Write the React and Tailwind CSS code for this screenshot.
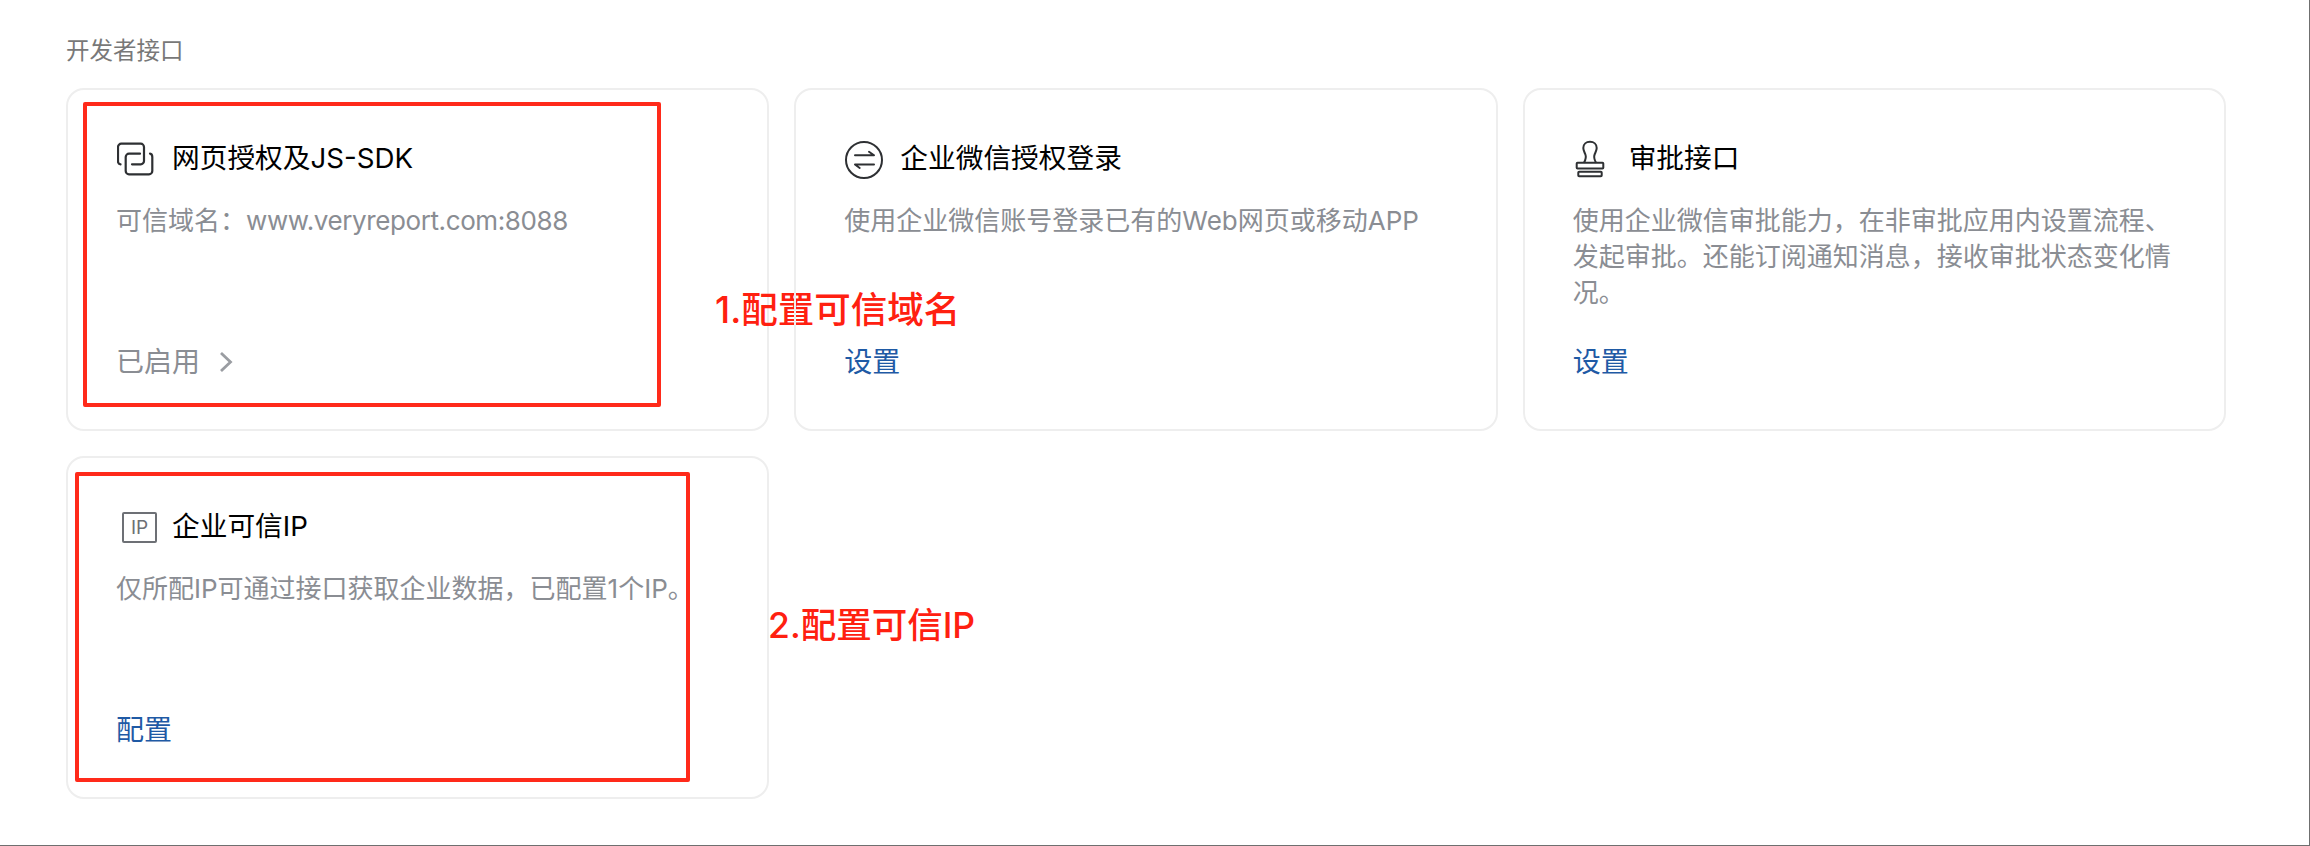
const FONT = "font-['Inter','Noto_Sans_CJK_SC',sans-serif]";

function LinkIcon() {
  return (
    <svg width="38" height="36" viewBox="0 0 38 36" fill="none" stroke="#2e3033" strokeWidth="2.2" strokeLinecap="round" className="absolute left-[1px] top-[3px]">
      <path d="M3.5 22.3Q1 22 1 19.5V5a3.3 3.3 0 0 1 3.3-3.3H23.7A3.3 3.3 0 0 1 27 5V19a3.3 3.3 0 0 1-3.3 3.3H15" />
      <path d="M23 11.7H12A3.3 3.3 0 0 0 8.7 15V29a3.3 3.3 0 0 0 3.3 3.3H32a3.3 3.3 0 0 0 3.3-3.3V15Q35.3 12 33 11.7" />
    </svg>
  );
}

function SwapIcon() {
  return (
    <svg width="40" height="40" viewBox="0 0 40 40" fill="none" stroke="#2e3033" strokeWidth="2" strokeLinecap="round" strokeLinejoin="round" className="absolute left-0 top-[1px]">
      <circle cx="20" cy="20" r="18" />
      <path d="M11 15.3H30L25 11.8" />
      <path d="M30 24.5H11L15.7 28" />
    </svg>
  );
}

function StampIcon() {
  return (
    <svg width="36" height="38" viewBox="0 0 36 38" fill="none" stroke="#2e3033" strokeWidth="2" strokeLinejoin="round" className="absolute left-0 top-[1px]">
      <rect x="3.7" y="22.7" width="26.6" height="5.8" rx="0.8" />
      <rect x="5.3" y="31.7" width="23.4" height="4.5" rx="0.8" />
      <path d="M11 22.7C13 19 13.6 17.5 12.4 14.5 11.2 11.6 10.3 10.2 10.3 8 10.3 4.2 13.2 1.7 17 1.7S23.7 4.2 23.7 8C23.7 10.2 22.8 11.6 21.6 14.5 20.4 17.5 21 19 23 22.7" />
    </svg>
  );
}

function IpIcon() {
  return (
    <span className="absolute left-[6px] top-[5px] flex h-[31px] w-[35px] items-center justify-center rounded-[2px] border-2 border-[#6d7075] text-[19px] leading-none text-[#6d7075]">
      IP
    </span>
  );
}

function ApiCard({ icon, title, desc, children, footer }) {
  return (
    <div className="relative flex h-[343px] flex-col rounded-[18px] border-2 border-[#eeeeee] pl-[48px] pt-[49px] pb-[48px]">
      <div className="relative flex h-[38px] items-center pl-[56px] text-[27.7px] leading-[38px] text-black">
        {icon}
        <span>{title}</span>
      </div>
      <p className="mt-[26px] w-[610px] text-[26px] leading-[36px] text-[#8a8d93]">{desc}</p>
      <div className="mt-auto flex h-[38px] items-center text-[28px] leading-[38px]">{footer}</div>
      {children}
    </div>
  );
}

const setLink = <span className="text-[#1f5aa5]">设置</span>;

export default function App() {
  return (
    <div className={`h-[846px] w-[2310px] border-r border-b border-[#6f6f6f] bg-white pl-[66px] pt-[33px] ${FONT}`}>
      <h2 className="mb-[19px] h-[36px] text-[23.5px] font-normal leading-[36px] text-[#787878]">开发者接口</h2>
      <div className="grid w-[2160px] grid-cols-3 gap-[25px]">
        <ApiCard
          icon={<LinkIcon />}
          title="网页授权及JS-SDK"
          desc={<>可信域名：<span className="tracking-[-0.4px]">www.veryreport.com:8088</span></>}
          footer={
            <span className="flex items-center text-[#8a8d93]">
              已启用
              <svg width="14" height="22" viewBox="0 0 14 22" fill="none" stroke="#9a9da2" strokeWidth="2.8" className="ml-[19px]">
                <path d="M2 2L11.5 11 2 20" />
              </svg>
            </span>
          }
        >
          <div className="absolute left-[15px] top-[12px] h-[305px] w-[578px] rounded-[2px] border-4 border-[#ff2a1a]" />
          <span className="absolute left-[647px] top-[200px] whitespace-nowrap text-[36.5px] font-medium leading-[40px] text-[#ff2010]">1.配置可信域名</span>
        </ApiCard>
        <ApiCard icon={<SwapIcon />} title="企业微信授权登录" desc="使用企业微信账号登录已有的Web网页或移动APP" footer={setLink} />
        <ApiCard
          icon={<StampIcon />}
          title="审批接口"
          desc="使用企业微信审批能力，在非审批应用内设置流程、发起审批。还能订阅通知消息，接收审批状态变化情况。"
          footer={setLink}
        />
        <ApiCard
          icon={<IpIcon />}
          title="企业可信IP"
          desc="仅所配IP可通过接口获取企业数据，已配置1个IP。"
          footer={<span className="text-[#1f5aa5]">配置</span>}
        >
          <div className="absolute left-[7px] top-[14px] h-[310px] w-[615px] rounded-[2px] border-4 border-[#ff2a1a]" />
          <span className="absolute left-[700px] top-[148px] whitespace-nowrap text-[35.5px] font-medium leading-[40px] text-[#ff2010]">2.配置可信IP</span>
        </ApiCard>
      </div>
    </div>
  );
}
